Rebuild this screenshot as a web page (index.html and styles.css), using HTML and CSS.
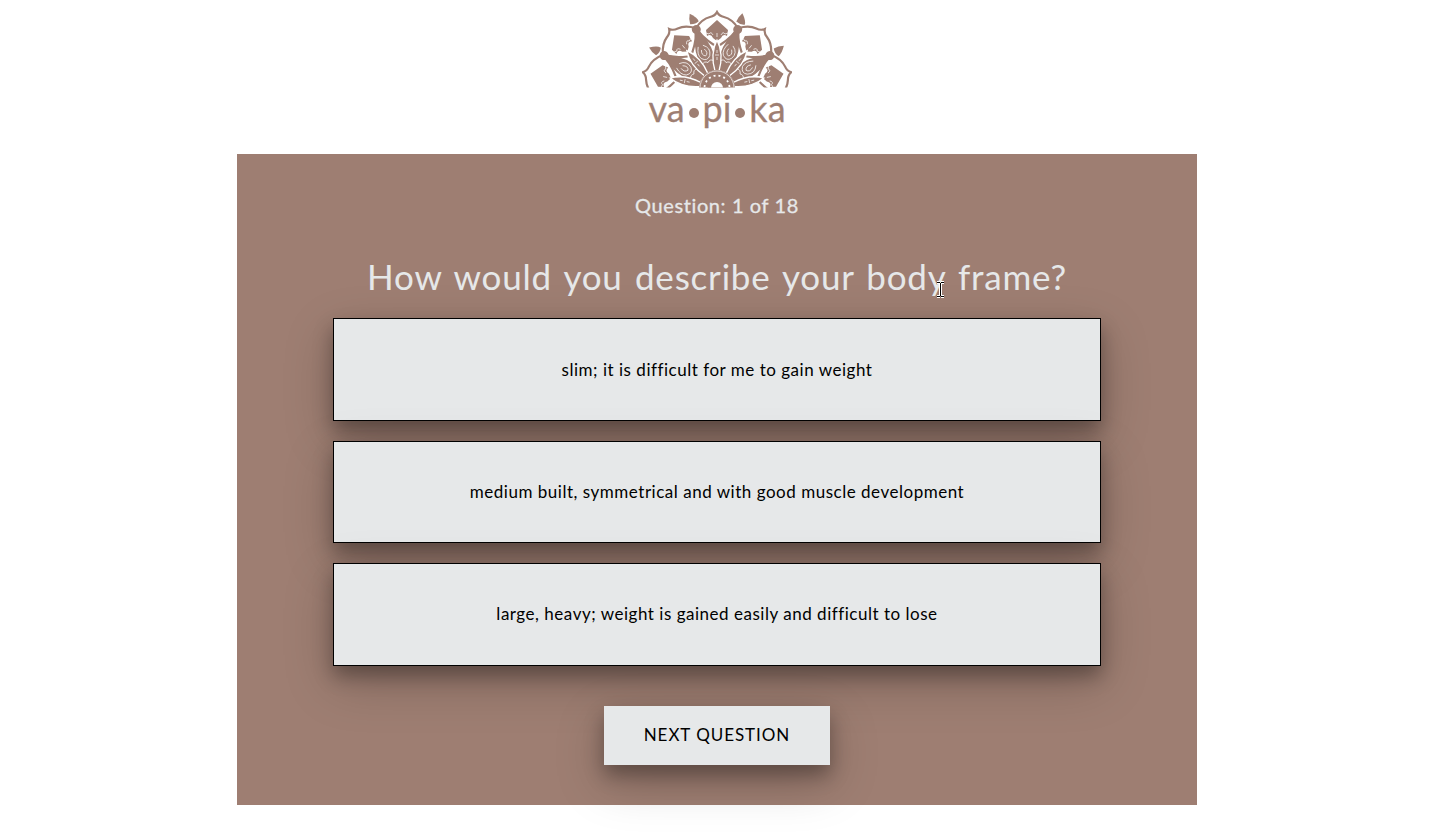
FILE: index.html
```html
<!DOCTYPE html>
<html lang="en">
<head>
<meta charset="utf-8">
<title>vapika</title>
<link rel="stylesheet" href="styles.css">
</head>
<body>
<header class="brand">
<svg class="mandala" viewBox="0 0 150 79" width="150" height="79" aria-hidden="true">
<defs>
<clipPath id="half"><rect width="150" height="77.500"/></clipPath>
<g id="outer">
<path class="line" d="M-21-60Q-15-69-7-71Q-2-72 0-76Q2-72 7-71Q15-69 21-60"/>
<path class="solid" d="M0-68L11-58L10-52Q6-55 4-50L0-47L-4-50Q-6-55-10-52L-11-58Z"/>
<path class="light" d="M-11-55l3 1q2-3 4 1M11-55l-3 1q-2-3-4 1M0-55V-51"/>
</g>
<g id="arms">
<path class="line" d="M-21-61Q-17-52-3-43M21-61Q17-52 3-43"/>
</g>
<g id="inner">
<path class="body" d="M-2-64H2L5-54Q11-40 8-30L4-17H-4L-8-30Q-11-40-5-54Z"/>
<path class="light" d="M-4-45Q-8-38-5-33Q0-28 4-33Q8-40 1-45M-2-41Q-4-36 0-34Q4-36 1-41M-6-27Q-3-30 0-27Q3-30 6-27"/>
<circle class="solid" cy="-62" r="4.500"/>
<path class="solid" d="M-1-79Q5-73 5-69Q1-67-4-69Q-4-74-1-79Z"/>
</g>
<g id="leaf">
<path class="vein" d="M0-48Q7-34 2-17H-2Q-7-34 0-48Z"/>
<path class="light" d="M0-38V-35M0-31V-28M-2-33H2"/>
</g>
</defs>
<g clip-path="url(#half)"><g transform="translate(75 78)">
<use href="#outer" transform="rotate(-78)"/><use href="#outer" transform="rotate(-39)"/><use href="#outer"/><use href="#outer" transform="rotate(39)"/><use href="#outer" transform="rotate(78)"/>
<use href="#inner" transform="rotate(-58.500)"/><use href="#inner" transform="rotate(-19.500)"/><use href="#inner" transform="rotate(19.500)"/><use href="#inner" transform="rotate(58.500)"/>
<use href="#arms" transform="rotate(-78)"/><use href="#arms" transform="rotate(-39)"/><use href="#arms"/><use href="#arms" transform="rotate(39)"/><use href="#arms" transform="rotate(78)"/>
<use href="#leaf" transform="rotate(-78)"/><use href="#leaf" transform="rotate(-39)"/><use href="#leaf"/><use href="#leaf" transform="rotate(39)"/><use href="#leaf" transform="rotate(78)"/>
<circle class="solid" r="18"/><circle class="light" r="17"/><circle class="dots" r="12.500"/><circle class="hub" r="9.500"/><circle class="hole" r="6"/>
</g></g>
</svg>
<div class="wordmark">va<i></i>pi<i></i>ka</div>
</header>
<main class="quiz">
<p class="progress">Question: 1 of 18</p>
<h1 class="question">How would you describe your body frame?</h1>
<div class="answers">
<button class="answer">slim; it is difficult for me to gain weight</button>
<button class="answer">medium built, symmetrical and with good muscle development</button>
<button class="answer">large, heavy; weight is gained easily and difficult to lose</button>
</div>
<button class="next">NEXT QUESTION</button>
<svg class="cursor" width="9" height="17" viewBox="0 0 9 17" aria-hidden="true"><path class="halo" d="M1 1.500H4M5 1.500H8M4.500 2V15M1 15.500H4M5 15.500H8"/><path class="beam" d="M1 1.500H4M5 1.500H8M4.500 2V15M1 15.500H4M5 15.500H8"/></svg>
</main>
</body>
</html>
```
FILE: styles.css
```css
* { box-sizing: border-box; }
body { margin: 0; padding-right: 4px; min-height: 836px; background: #fff; font-family: Lato, sans-serif; overflow: hidden; }
.brand { height: 154px; padding-top: 10px; display: flex; flex-direction: column; align-items: center; color: #9e7e72; }
.mandala { display: block; flex: none; }
.solid { fill: #9e7e72; stroke: none; }
.line { fill: none; stroke: #9e7e72; stroke-width: 2.2; }
.light { fill: none; stroke: #fff; stroke-width: .7; }
.body { fill: #9e7e72; stroke: #fff; stroke-width: 1.6; }
.vein { fill: #9e7e72; stroke: #fff; stroke-width: 1.3; }
.dots { fill: none; stroke: #fff; stroke-width: 1.8; stroke-dasharray: 2 3; }
.hub { fill: #9e7e72; }
.hole { fill: #fff; }
.wordmark { display: flex; align-items: baseline; font: 400 36px/38px Lato, sans-serif; -webkit-text-stroke: .3px #9e7e72; }
.wordmark i { width: 10px; height: 10px; margin: 0 4px; border-radius: 50%; background: #9e7e72; align-self: center; position: relative; top: 5px; }
.quiz { width: 960px; height: 651px; margin: 0 auto; padding-top: 36px; background: #9e7e72; display: flex; flex-direction: column; align-items: center; position: relative; }
.progress { margin: 0; height: 63px; color: #e6e8e9; font: 400 20px/30px Lato, sans-serif; letter-spacing: .6px; -webkit-text-stroke: .3px #e6e8e9; }
.question { margin: 0; height: 65.45px; color: #e6e8e9; font: 400 35px/46px Lato, sans-serif; letter-spacing: .8px; word-spacing: 2.5px; white-space: nowrap; }
.answers { width: 768px; display: flex; flex-direction: column; gap: 20px; }
.answer, .next { background: #e6e8e9; color: #000; box-shadow: 0 10px 18px rgba(0,0,0,.3), 0 17px 50px rgba(0,0,0,.21); }
.answer { height: 102.4px; border: 1px solid #000; padding: 0; font: 17px/24px Lato, sans-serif; letter-spacing: .52px; }
.next { width: 226px; height: 59px; margin-top: 40px; border: 0; font: 17px/24px Lato, sans-serif; letter-spacing: .95px; }
.cursor { position: absolute; left: 699px; top: 127px; }
.halo { fill: none; stroke: #fff; stroke-width: 3; }
.beam { fill: none; stroke: #000; stroke-width: 1; }
```
